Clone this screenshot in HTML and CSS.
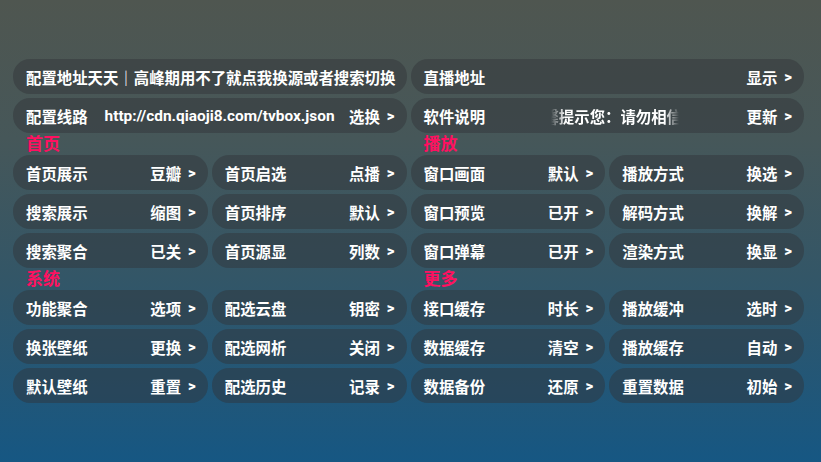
FILE: index.html
```html
<!DOCTYPE html>
<html lang="zh-CN">
<head>
<meta charset="utf-8">
<title>设置</title>
<link rel="stylesheet" href="styles.css">
</head>
<body>
<main class="page">
  <div class="grid">
    <div class="card wide"><span class="name">配置地址天天｜高峰期用不了就点我换源或者搜索切换</span></div>
    <div class="card wide"><span class="name">直播地址</span><span class="val">显示<i class="arr">&gt;</i></span></div>

    <div class="card wide"><span class="name">配置线路</span><span class="url">http://cdn.qiaoji8.com/tvbox.json</span><span class="val">选换<i class="arr">&gt;</i></span></div>
    <div class="card wide"><span class="name">软件说明</span><span class="marquee"><span class="marquee-text">温馨提示您：请勿相信</span></span><span class="val">更新<i class="arr">&gt;</i></span></div>

    <div class="label wide">首页</div>
    <div class="label wide">播放</div>

    <div class="card"><span class="name">首页展示</span><span class="val">豆瓣<i class="arr">&gt;</i></span></div>
    <div class="card"><span class="name">首页启选</span><span class="val">点播<i class="arr">&gt;</i></span></div>
    <div class="card"><span class="name">窗口画面</span><span class="val">默认<i class="arr">&gt;</i></span></div>
    <div class="card"><span class="name">播放方式</span><span class="val">换选<i class="arr">&gt;</i></span></div>

    <div class="card"><span class="name">搜索展示</span><span class="val">缩图<i class="arr">&gt;</i></span></div>
    <div class="card"><span class="name">首页排序</span><span class="val">默认<i class="arr">&gt;</i></span></div>
    <div class="card"><span class="name">窗口预览</span><span class="val">已开<i class="arr">&gt;</i></span></div>
    <div class="card"><span class="name">解码方式</span><span class="val">换解<i class="arr">&gt;</i></span></div>

    <div class="card"><span class="name">搜索聚合</span><span class="val">已关<i class="arr">&gt;</i></span></div>
    <div class="card"><span class="name">首页源显</span><span class="val">列数<i class="arr">&gt;</i></span></div>
    <div class="card"><span class="name">窗口弹幕</span><span class="val">已开<i class="arr">&gt;</i></span></div>
    <div class="card"><span class="name">渲染方式</span><span class="val">换显<i class="arr">&gt;</i></span></div>

    <div class="label wide">系统</div>
    <div class="label wide">更多</div>

    <div class="card"><span class="name">功能聚合</span><span class="val">选项<i class="arr">&gt;</i></span></div>
    <div class="card"><span class="name">配选云盘</span><span class="val">钥密<i class="arr">&gt;</i></span></div>
    <div class="card"><span class="name">接口缓存</span><span class="val">时长<i class="arr">&gt;</i></span></div>
    <div class="card"><span class="name">播放缓冲</span><span class="val">选时<i class="arr">&gt;</i></span></div>

    <div class="card"><span class="name">换张壁纸</span><span class="val">更换<i class="arr">&gt;</i></span></div>
    <div class="card"><span class="name">配选网析</span><span class="val">关闭<i class="arr">&gt;</i></span></div>
    <div class="card"><span class="name">数据缓存</span><span class="val">清空<i class="arr">&gt;</i></span></div>
    <div class="card"><span class="name">播放缓存</span><span class="val">自动<i class="arr">&gt;</i></span></div>

    <div class="card"><span class="name">默认壁纸</span><span class="val">重置<i class="arr">&gt;</i></span></div>
    <div class="card"><span class="name">配选历史</span><span class="val">记录<i class="arr">&gt;</i></span></div>
    <div class="card"><span class="name">数据备份</span><span class="val">还原<i class="arr">&gt;</i></span></div>
    <div class="card"><span class="name">重置数据</span><span class="val">初始<i class="arr">&gt;</i></span></div>
  </div>
</main>
</body>
</html>
```

FILE: styles.css
```css
html, body {
  margin: 0;
  padding: 0;
}

body {
  width: 821px;
  height: 462px;
  overflow: hidden;
  background: linear-gradient(to bottom, #4f5650 0%, #465759 30%, #335667 60%, #165783 100%);
  font-family: Roboto, "Noto Sans CJK SC", sans-serif;
  color: #ffffff;
}

.page {
  padding: 59px 17px 0 13px;
}

.grid {
  display: grid;
  grid-template-columns: repeat(4, 1fr);
  column-gap: 4px;
  row-gap: 4px;
}

.wide {
  grid-column: span 2;
}

.card {
  height: 35px;
  box-sizing: border-box;
  display: flex;
  align-items: center;
  padding: 0 12px 0 13px;
  border-radius: 17px;
  background: rgba(48, 52, 56, 0.45);
  font-size: 15.4px;
  font-weight: 700;
  white-space: nowrap;
  overflow: hidden;
}

.name {
  flex: none;
}

.url {
  margin-left: 17px;
  flex: none;
}

.val {
  margin-left: auto;
  flex: none;
  display: flex;
  align-items: center;
}

.arr {
  font-style: normal;
  font-family: Roboto, sans-serif;
  font-weight: 900;
  font-size: 15px;
  margin-left: 7px;
}

.marquee {
  width: 128px;
  margin-left: 66px;
  overflow: hidden;
  flex: none;
  -webkit-mask-image: linear-gradient(to right, transparent 0, #000 14px, #000 114px, transparent 128px);
  mask-image: linear-gradient(to right, transparent 0, #000 14px, #000 114px, transparent 128px);
}

.marquee-text {
  display: block;
  text-indent: -23px;
  white-space: nowrap;
}

.label {
  height: 14px;
  line-height: 14px;
  padding-left: 13px;
  font-size: 17px;
  font-weight: 700;
  color: #ff1060;
}
```
